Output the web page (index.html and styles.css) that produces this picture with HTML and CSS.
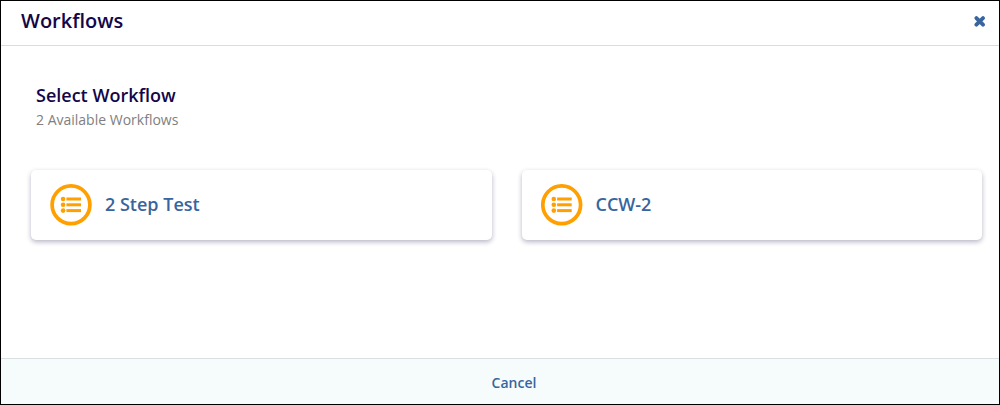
FILE: index.html
```
<!DOCTYPE html>
<html lang="en">
<head>
    <meta charset="utf-8">
    <title>Workflows</title>
    <meta name="viewport" content="width=device-width, initial-scale=1">
    <link rel="stylesheet" href="styles.css">
</head>
<body>
    <div class="modal">
        <header class="modal-header">
            <h1>Workflows</h1>
            <button type="button" class="close" aria-label="Close">
                <svg viewBox="0 0 12 12" width="12" height="12">
                    <path d="M2.4 3.1 L9 9.7 M9 3.1 L2.4 9.7" stroke="currentColor" stroke-width="3.8" stroke-linecap="round"/>
                </svg>
            </button>
        </header>

        <main class="modal-body">
            <div class="intro">
                <h2>Select Workflow</h2>
                <p>2 Available Workflows</p>
            </div>

            <!-- Workflow cards -->
            <div class="cards">
                <button type="button" class="card">
                    <svg class="icon" viewBox="0 0 42 42" width="42" height="42">
                        <circle cx="21" cy="20.8" r="18.9" fill="none" stroke="currentColor" stroke-width="3.7"/>
                        <g fill="currentColor">
                            <circle cx="13.1" cy="15" r="2.3"/>
                            <circle cx="13.1" cy="20.8" r="2.3"/>
                            <circle cx="13.1" cy="26.6" r="2.3"/>
                            <rect x="16.4" y="13.5" width="14.6" height="3"/>
                            <rect x="16.4" y="19.3" width="14.6" height="3"/>
                            <rect x="16.4" y="25.1" width="14.6" height="3"/>
                        </g>
                    </svg>
                    <span class="card-title">2 Step Test</span>
                </button>
                <button type="button" class="card">
                    <svg class="icon" viewBox="0 0 42 42" width="42" height="42">
                        <circle cx="20.7" cy="20.8" r="18.9" fill="none" stroke="currentColor" stroke-width="3.7"/>
                        <g fill="currentColor">
                            <circle cx="12.8" cy="15" r="2.3"/>
                            <circle cx="12.8" cy="20.8" r="2.3"/>
                            <circle cx="12.8" cy="26.6" r="2.3"/>
                            <rect x="16.1" y="13.5" width="14.6" height="3"/>
                            <rect x="16.1" y="19.3" width="14.6" height="3"/>
                            <rect x="16.1" y="25.1" width="14.6" height="3"/>
                        </g>
                    </svg>
                    <span class="card-title">CCW-2</span>
                </button>
            </div>
        </main>

        <footer class="modal-footer">
            <button type="button" class="cancel">Cancel</button>
        </footer>
    </div>
</body>
</html>
```
FILE: styles.css
```
* {
    box-sizing: border-box;
}

body {
    margin: 0;
    background-color: #fff;
    color: #140648;
    font-family: "Open Sans", "Noto Sans", sans-serif;
}

h1, h2, p {
    margin: 0;
}

button {
    border: 0;
    padding: 0;
    background: none;
    color: #38659e;
    font-family: inherit;
    font-weight: 600;
    cursor: pointer;
}

.modal {
    display: flex;
    flex-direction: column;
    min-height: 100vh;
    border: 1px solid #000;
}

/* Header */
.modal-header {
    display: flex;
    align-items: center;
    justify-content: space-between;
    padding: 6px 13px 10px 20px;
    border-bottom: 1px solid #d5dde9;
}

h1 {
    font-size: 20px;
    line-height: 28px;
    font-weight: 600;
}

.close {
    display: flex;
}

/* Body */
.modal-body {
    flex: 1;
    padding: 36px 17px 30px 30px;
}

.intro {
    padding-left: 5px;
    margin-bottom: 38px;
}

h2 {
    font-size: 18px;
    line-height: 26px;
    font-weight: 600;
}

.intro p {
    color: #808080;
    font-size: 14px;
    line-height: 24px;
}

.cards {
    display: grid;
    grid-template-columns: 1fr 1fr;
    gap: 30px;
}

.card {
    display: flex;
    align-items: center;
    gap: 13px;
    padding: 14px 19px;
    border-radius: 5px;
    background-color: #fff;
    box-shadow: 0 2px 5px rgba(20, 6, 63, 0.3);
    font-size: 18px;
    line-height: 26px;
}

.card-title {
    padding-bottom: 2px;
}

.icon {
    color: #ff9f00;
}

/* Footer */
.modal-footer {
    display: flex;
    justify-content: center;
    padding: 13px 0 11px 28px;
    border-top: 1px solid #d9dfe3;
    background-color: #f6fcfc;
}

.cancel {
    font-size: 14px;
    line-height: 21px;
}

.card:hover,
.close:hover,
.cancel:hover {
    color: #140648;
}
```
